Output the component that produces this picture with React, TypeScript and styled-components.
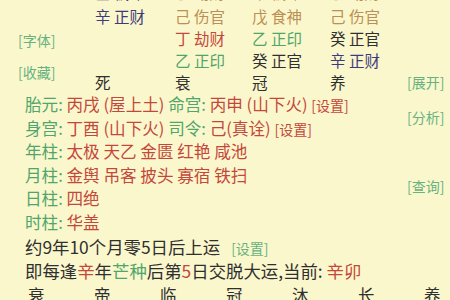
import React from 'react';
import styled, { createGlobalStyle } from 'styled-components';

const GlobalStyle = createGlobalStyle`
  html, body { margin: 0; padding: 0; background: #fbf7cc; }
  body {
    font-family: "Noto Sans CJK SC", "Noto Sans", sans-serif;
    width: 450px; height: 300px; overflow: hidden;
  }
`;

const COLORS: Record<string, string> = {
  green: '#4fa66c',
  link: '#66b381',
  red: '#c4473c',
  dark: '#2f2f2f',
  blue: '#3d3b7c',
  tan: '#bb8f55',
};

type Tone = keyof typeof COLORS;

const Page = styled.div`
  width: 450px;
  height: 300px;
  overflow: hidden;
  background: #fbf7cc;
  color: ${COLORS.dark};
`;

const Top = styled.div`
  display: flex;
`;

const Main = styled.div`
  flex: 1;
  display: flex;
  flex-direction: column;
`;

const Rail = styled.div`
  width: 43px;
  display: flex;
  flex-direction: column;
`;

const PillarArea = styled.div`
  display: flex;
`;

const SideLabels = styled.div`
  width: 95px;
  padding: 30px 0 0 18px;
  box-sizing: border-box;
  display: flex;
  flex-direction: column;
  gap: 12px;
`;

const Link = styled.span<{ $tone?: Tone; $top?: number; $left?: number }>`
  display: inline-block;
  font-size: 14px;
  line-height: 20px;
  color: ${(p) => COLORS[p.$tone ?? 'link']};
  margin-top: ${(p) => (p.$top ? `${p.$top}px` : '0')};
  margin-left: ${(p) => (p.$left ? `${p.$left}px` : '0')};
  white-space: nowrap;
`;

const Grid = styled.div`
  display: grid;
  grid-template-columns: 80px 77px 78px 70px;
  grid-template-rows: 22px 24px 22px 22px 22px;
  margin-top: -19px;
  font-size: 15.5px;
  line-height: 22px;
`;

const Cell = styled.div<{ $tone: Tone }>`
  color: ${(p) => COLORS[p.$tone]};
  white-space: nowrap;
  align-self: end;
`;

const Info = styled.div`
  padding-left: 25px;
  font-size: 16.6px;
  line-height: 23.6px;
`;

const Line = styled.div`
  white-space: nowrap;
`;

const T = styled.span<{ $tone: Tone }>`
  color: ${(p) => COLORS[p.$tone]};
`;

const Plain = styled.div`
  padding-left: 25px;
  font-size: 17.4px;
  line-height: 24px;
  color: ${COLORS.dark};
  white-space: nowrap;
`;

const Stages = styled.div`
  display: grid;
  grid-template-columns: repeat(7, 66px);
  padding-left: 28px;
  font-size: 16.5px;
  line-height: 24px;
  color: ${COLORS.dark};
`;

const rows: [string, Tone][][] = [
  [['壬 偏印', 'blue'], ['丁 劫财', 'tan'], ['甲 偏印', 'tan'], ['丁 劫财', 'tan']],
  [['辛 正财', 'blue'], ['己 伤官', 'tan'], ['戊 食神', 'tan'], ['己 伤官', 'tan']],
  [['', 'dark'], ['丁 劫财', 'red'], ['乙 正印', 'green'], ['癸 正官', 'dark']],
  [['', 'dark'], ['乙 正印', 'green'], ['癸 正官', 'dark'], ['辛 正财', 'blue']],
  [['死', 'dark'], ['衰', 'dark'], ['冠', 'dark'], ['养', 'dark']],
];

export default function App() {
  return (
    <Page>
      <GlobalStyle />
      <Top>
        <Main>
          <PillarArea>
            <SideLabels>
              <Link>[字体]</Link>
              <Link>[收藏]</Link>
            </SideLabels>
            <Grid>
              {rows.map((r, i) =>
                r.map(([text, tone], j) => (
                  <Cell key={`${i}-${j}`} $tone={tone}>
                    {text}
                  </Cell>
                ))
              )}
            </Grid>
          </PillarArea>
          <Info>
            <Line>
              <T $tone="green">胎元: </T>
              <T $tone="red">丙戌 (屋上土) </T>
              <T $tone="green">命宫: </T>
              <T $tone="red">丙申 (山下火) </T>
              <Link $tone="red">[设置]</Link>
            </Line>
            <Line>
              <T $tone="green">身宫: </T>
              <T $tone="red">丁酉 (山下火) </T>
              <T $tone="green">司令: </T>
              <T $tone="red">己(真诠) </T>
              <Link $tone="red">[设置]</Link>
            </Line>
            <Line>
              <T $tone="green">年柱: </T>
              <T $tone="red">太极 天乙 金匮 红艳 咸池</T>
            </Line>
            <Line>
              <T $tone="green">月柱: </T>
              <T $tone="red">金舆 吊客 披头 寡宿 铁扫</T>
            </Line>
            <Line>
              <T $tone="green">日柱: </T>
              <T $tone="red">四绝</T>
            </Line>
            <Line>
              <T $tone="green">时柱: </T>
              <T $tone="red">华盖</T>
            </Line>
          </Info>
        </Main>
        <Rail>
          <Link $top={72}>[展开]</Link>
          <Link $top={15}>[分析]</Link>
          <Link $top={49}>[查询]</Link>
        </Rail>
      </Top>
      <Plain>
        约9年10个月零5日后上运<Link $left={11}>[设置]</Link>
      </Plain>
      <Plain>
        即每逢<T $tone="red">辛</T>年<T $tone="green">芒种</T>后第<T $tone="red">5</T>日交脱大运,当前: <T $tone="red">辛卯</T>
      </Plain>
      <Stages>
        {['衰', '帝', '临', '冠', '沐', '长', '养'].map((s) => (
          <span key={s}>{s}</span>
        ))}
      </Stages>
    </Page>
  );
}
